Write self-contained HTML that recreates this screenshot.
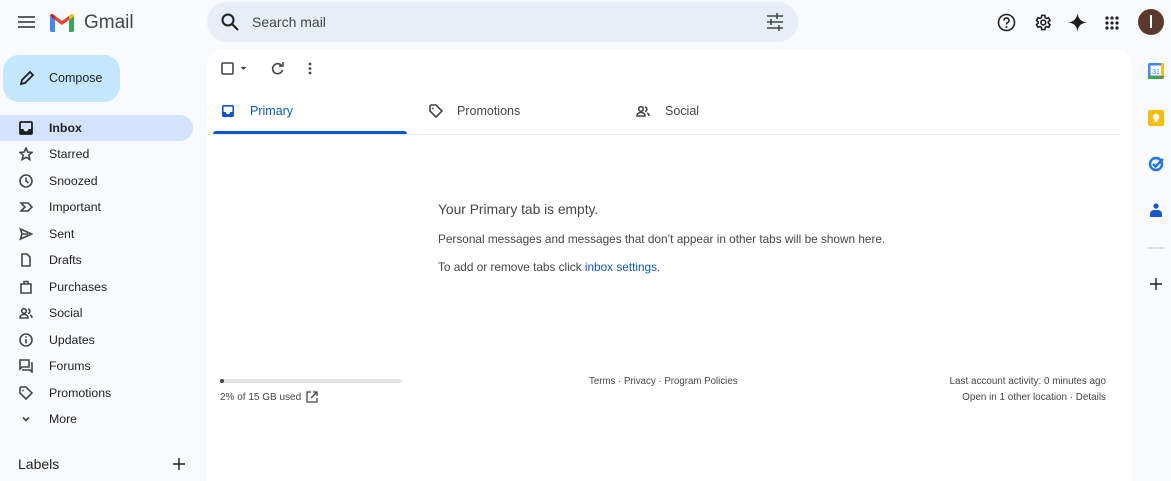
<!DOCTYPE html>
<html><head><meta charset="utf-8"><style>
*{margin:0;padding:0;box-sizing:border-box}
html,body{width:1171px;height:481px;overflow:hidden}
body{background:#f8fafd;font-family:"Liberation Sans",Arial,sans-serif;color:#1f1f1f;position:relative}
.a{position:absolute}
svg{display:block}
.nav{position:absolute;left:0;width:193px;height:26px;font-size:12.3px;display:flex;align-items:center}
.nav svg{position:absolute;left:19px}
.nav span{position:absolute;left:49px}
.ic{fill:none;stroke:#444746;stroke-width:1.6}
</style></head><body>
<svg class="a" style="left:18px;top:15px" width="18" height="14"><path d="M0 2h17M0 7h17M0 12h17" stroke="#444746" stroke-width="1.8"/></svg>
<svg class="a" style="left:50px;top:13px" width="24" height="19" viewBox="0 0 24 19">
<path d="M0 3v14a2 2 0 0 0 2 2h3V7z" fill="#4285f4"/>
<path d="M19 19h3a2 2 0 0 0 2-2V3l-5 4z" fill="#34a853"/>
<path d="M0 3a2 2 0 0 1 3.2-1.6L5 2.8V7L0 3z" fill="#c5221f"/>
<path d="M19 7V2.8l1.8-1.4A2 2 0 0 1 24 3z" fill="#fbbc04"/>
<path d="M5 7V2.8L12 8l7-5.2V7l-7 5z" fill="#ea4335"/>
</svg>
<div class="a" style="left:84px;top:12px;font-size:19px;color:#444746">Gmail</div>
<div class="a" style="left:207px;top:2px;width:591px;height:40px;border-radius:20px;background:#e9eef6"></div>
<svg class="a" style="left:221px;top:13px" width="18" height="18"><circle cx="7" cy="7" r="5.5" fill="none" stroke="#1f1f1f" stroke-width="2"/><path d="M11 11l6 6" stroke="#1f1f1f" stroke-width="2"/></svg>
<div class="a" style="left:252px;top:14px;font-size:14px;color:#444746">Search mail</div>
<svg class="a" style="left:766px;top:13px" width="18" height="18"><path d="M1 3h16M1 9h16M1 15h16" stroke="#444746" stroke-width="1.6"/><path d="M11 0v6M5 6v6M13 12v6" stroke="#444746" stroke-width="1.6"/></svg>
<svg class="a" style="left:997px;top:13px" width="19" height="19"><circle cx="9.5" cy="9.5" r="8" fill="none" stroke="#1f1f1f" stroke-width="1.6"/><path d="M7 7.5a2.5 2.5 0 1 1 3.3 2.3c-.7.3-.8.8-.8 1.7" fill="none" stroke="#1f1f1f" stroke-width="1.6"/><circle cx="9.5" cy="14" r="1" fill="#1f1f1f"/></svg>
<svg class="a" style="left:1033px;top:13px" width="19" height="19" viewBox="0 0 24 24"><path d="M19.4 13a7.5 7.5 0 0 0 0-2l2.1-1.6-2-3.5-2.5 1a7 7 0 0 0-1.7-1L15 3h-4l-.4 2.9a7 7 0 0 0-1.7 1l-2.5-1-2 3.5L6.5 11a7.5 7.5 0 0 0 0 2l-2.1 1.6 2 3.5 2.5-1a7 7 0 0 0 1.7 1L11 21h4l.4-2.9a7 7 0 0 0 1.7-1l2.5 1 2-3.5z" fill="none" stroke="#1f1f1f" stroke-width="2"/><circle cx="13" cy="12" r="3" fill="none" stroke="#1f1f1f" stroke-width="2"/></svg>
<svg class="a" style="left:1068px;top:13px" width="19" height="19"><path d="M9.5 0C10 5 13 9 19 9.5 13 10 10 13 9.5 19 9 13 6 10 0 9.5 6 9 9 5 9.5 0z" fill="#1f1f1f"/></svg>
<svg class="a" style="left:1105px;top:16px" width="14" height="14"><g fill="#1f1f1f"><circle cx="2" cy="2" r="1.6"/><circle cx="7" cy="2" r="1.6"/><circle cx="12" cy="2" r="1.6"/><circle cx="2" cy="7" r="1.6"/><circle cx="7" cy="7" r="1.6"/><circle cx="12" cy="7" r="1.6"/><circle cx="2" cy="12" r="1.6"/><circle cx="7" cy="12" r="1.6"/><circle cx="12" cy="12" r="1.6"/></g></svg>
<div class="a" style="left:1138px;top:9px;width:26px;height:26px;border-radius:50%;background:#5b3a2e"></div>
<div class="a" style="left:1150px;top:15px;width:2px;height:13px;background:#fff"></div>
<div class="a" style="left:3px;top:55px;width:117px;height:47px;border-radius:16px;background:#c2e7ff"></div>
<svg class="a" style="left:19px;top:70px" width="16" height="16"><path d="M2 14l1-4L11 2l3 3-8 8z" fill="none" stroke="#1f1f1f" stroke-width="1.8"/></svg>
<div class="a" style="left:49px;top:71px;font-size:12.5px">Compose</div>
<div class="a" style="left:0;top:115px;width:193px;height:26px;border-radius:0 13px 13px 0;background:#d3e3fd"></div>
<div class="nav" style="top:115px;font-weight:bold"><svg width="14" height="14"><rect x="1" y="1" width="12" height="12" rx="1" fill="none" stroke="#1f1f1f" stroke-width="1.8"/><path d="M1 8h3.5a2.5 2.5 0 0 0 5 0H13v5H1z" fill="#1f1f1f"/></svg><span>Inbox</span></div>
<div class="nav" style="top:141px"><svg width="14" height="14"><path d="M7 1l1.8 4 4.2.4-3.2 2.8 1 4.3L7 10.3 3.2 12.5l1-4.3L1 5.4l4.2-.4z" class="ic" stroke-width="1.3"/></svg><span>Starred</span></div>
<div class="nav" style="top:168px"><svg width="14" height="14"><circle cx="7" cy="7" r="6" class="ic" stroke-width="1.4"/><path d="M7 3.5V7l2.5 2" class="ic" stroke-width="1.4"/></svg><span>Snoozed</span></div>
<div class="nav" style="top:194px"><svg width="14" height="14"><path d="M2 3h7l4 4-4 4H2l4-4z" class="ic" stroke-width="1.4"/></svg><span>Important</span></div>
<div class="nav" style="top:221px"><svg width="14" height="14"><path d="M1.5 2l11 5-11 5 1.5-5zM3 7h6" class="ic" stroke-width="1.4"/></svg><span>Sent</span></div>
<div class="nav" style="top:247px"><svg width="14" height="14"><path d="M3 1h5l3 3v9H3z" class="ic" stroke-width="1.4"/></svg><span>Drafts</span></div>
<div class="nav" style="top:274px"><svg width="14" height="14"><path d="M2 4h10v9H2zM5 4V1.5h4V4" class="ic" stroke-width="1.4"/></svg><span>Purchases</span></div>
<div class="nav" style="top:300px"><svg width="14" height="14"><circle cx="5" cy="5" r="2.3" class="ic" stroke-width="1.3"/><path d="M1 12c0-2.5 2-3.5 4-3.5s4 1 4 3.5zM9 3a2.3 2.3 0 0 1 0 4.5M11 9c1.3.5 2 1.5 2 3" class="ic" stroke-width="1.3"/></svg><span>Social</span></div>
<div class="nav" style="top:327px"><svg width="14" height="14"><circle cx="7" cy="7" r="6" class="ic" stroke-width="1.4"/><path d="M7 6v4.5" class="ic" stroke-width="1.4"/><circle cx="7" cy="4" r=".9" fill="#444746"/></svg><span>Updates</span></div>
<div class="nav" style="top:353px"><svg width="14" height="14"><path d="M1 1h9v7H3l-2 2zM12 4h1v9l-2-2H4V10" class="ic" stroke-width="1.4"/></svg><span>Forums</span></div>
<div class="nav" style="top:380px"><svg width="14" height="14"><path d="M1 2v5l6 6 6-6-6-6H2z" class="ic" stroke-width="1.4"/><circle cx="4" cy="4.5" r=".9" fill="#444746"/></svg><span>Promotions</span></div>
<div class="nav" style="top:406px"><svg width="14" height="14"><path d="M4 5.5l3 3 3-3" class="ic" stroke-width="1.3"/></svg><span>More</span></div>
<div class="a" style="left:18px;top:456px;font-size:14px;color:#1f1f1f">Labels</div>
<svg class="a" style="left:173px;top:458px" width="12" height="12"><path d="M6 0v12M0 6h12" stroke="#1f1f1f" stroke-width="1.4"/></svg>
<div class="a" style="left:207px;top:49px;width:925px;height:432px;background:#fff;border-radius:16px 16px 0 0"></div>
<svg class="a" style="left:221px;top:62px" width="30" height="14"><rect x="1" y="1" width="11" height="11" rx="1" fill="none" stroke="#444746" stroke-width="1.6"/><path d="M19.5 5h6l-3 3z" fill="#444746"/></svg>
<svg class="a" style="left:271px;top:62px" width="13" height="13"><path d="M10.5 3.5A5 5 0 1 0 11.5 8" fill="none" stroke="#444746" stroke-width="1.6"/><path d="M8 4h4V0" fill="none" stroke="#444746" stroke-width="1.6"/></svg>
<svg class="a" style="left:308px;top:62px" width="4" height="13"><circle cx="2" cy="2" r="1.4" fill="#444746"/><circle cx="2" cy="6.5" r="1.4" fill="#444746"/><circle cx="2" cy="11" r="1.4" fill="#444746"/></svg>
<svg class="a" style="left:222px;top:105px" width="12" height="12"><rect x=".8" y=".8" width="10.4" height="10.4" rx="1" fill="none" stroke="#0b57d0" stroke-width="1.6"/><path d="M.8 7h3a2.2 2.2 0 0 0 4.4 0h3v4.2H.8z" fill="#0b57d0"/></svg>
<div class="a" style="left:250px;top:104px;font-size:12.5px;color:#0b57d0">Primary</div>
<div class="a" style="left:213px;top:131px;width:194px;height:3px;background:#0b57d0;border-radius:3px 3px 0 0"></div>
<svg class="a" style="left:429px;top:104px" width="14" height="14"><path d="M1 2v5l6 6 6-6-6-6H2z" class="ic" stroke-width="1.4"/><circle cx="4" cy="4.5" r=".9" fill="#444746"/></svg>
<div class="a" style="left:457px;top:104px;font-size:12.5px;color:#444746">Promotions</div>
<svg class="a" style="left:636px;top:104px" width="14" height="14"><circle cx="5" cy="5" r="2.3" class="ic" stroke-width="1.3"/><path d="M1 12c0-2.5 2-3.5 4-3.5s4 1 4 3.5zM9 3a2.3 2.3 0 0 1 0 4.5M11 9c1.3.5 2 1.5 2 3" class="ic" stroke-width="1.3"/></svg>
<div class="a" style="left:665px;top:104px;font-size:12.5px;color:#444746">Social</div>
<div class="a" style="left:207px;top:134px;width:913px;height:1px;background:#e8eaed"></div>
<div class="a" style="left:438px;top:202px;font-size:13.8px;color:#444746">Your Primary tab is empty.</div>
<div class="a" style="left:438px;top:232px;font-size:11.8px;color:#444746">Personal messages and messages that don’t appear in other tabs will be shown here.</div>
<div class="a" style="left:438px;top:260px;font-size:11.8px;color:#444746">To add or remove tabs click <span style="color:#0b57d0">inbox settings</span>.</div>
<div class="a" style="left:220px;top:379px;width:181px;height:4px;border-radius:2px;background:#e3e3e3"></div>
<div class="a" style="left:220px;top:379px;width:4px;height:4px;border-radius:2px;background:#444746"></div>
<div class="a" style="left:220px;top:392px;font-size:10px;color:#444746">2% of 15 GB used</div>
<svg class="a" style="left:306px;top:391px" width="12" height="12"><path d="M5 1H1v10h10V7M7 1h4v4M11 1L5 7" fill="none" stroke="#444746" stroke-width="1.3"/></svg>
<div class="a" style="left:589px;top:376px;font-size:9.7px;color:#444746">Terms · Privacy · Program Policies</div>
<div class="a" style="left:900px;width:206px;text-align:right;top:376px;font-size:9.9px;color:#444746">Last account activity: 0 minutes ago</div>
<div class="a" style="left:900px;width:206px;text-align:right;top:392px;font-size:9.9px;color:#444746">Open in 1 other location · Details</div>
<svg class="a" style="left:1148px;top:63px" width="16" height="16"><rect x="0" y="0" width="16" height="16" rx="2" fill="#4285f4"/><rect x="2.5" y="2.5" width="11" height="10" fill="#fff"/><rect x="0" y="13" width="13" height="3" fill="#34a853"/><rect x="13" y="0" width="3" height="13" fill="#fbbc04"/><path d="M13 13h3l-3 3z" fill="#ea4335"/><text x="8" y="11" font-size="7" text-anchor="middle" fill="#4285f4" font-family="Liberation Sans">31</text></svg>
<svg class="a" style="left:1148px;top:110px" width="16" height="16"><rect width="16" height="16" rx="2" fill="#fbbc04"/><circle cx="8" cy="7" r="3.3" fill="#fff"/><rect x="6.5" y="10" width="3" height="2" fill="#fff"/></svg>
<svg class="a" style="left:1148px;top:156px" width="16" height="16"><circle cx="8" cy="8" r="6" fill="none" stroke="#1a73e8" stroke-width="2.4"/><path d="M5 8l2.5 2.5L15 3" fill="none" stroke="#1a73e8" stroke-width="2.4"/></svg>
<svg class="a" style="left:1150px;top:203px" width="12" height="14"><circle cx="6" cy="3" r="2.6" fill="#1a56d0"/><path d="M0 14v-3a4 4 0 0 1 4-4h4a4 4 0 0 1 4 4v3z" fill="#1a56d0"/></svg>
<div class="a" style="left:1148px;top:247px;width:16px;height:2px;background:#e3e3e3"></div>
<svg class="a" style="left:1150px;top:278px" width="12" height="12"><path d="M6 0v12M0 6h12" stroke="#1f1f1f" stroke-width="1.4"/></svg>
</body></html>
